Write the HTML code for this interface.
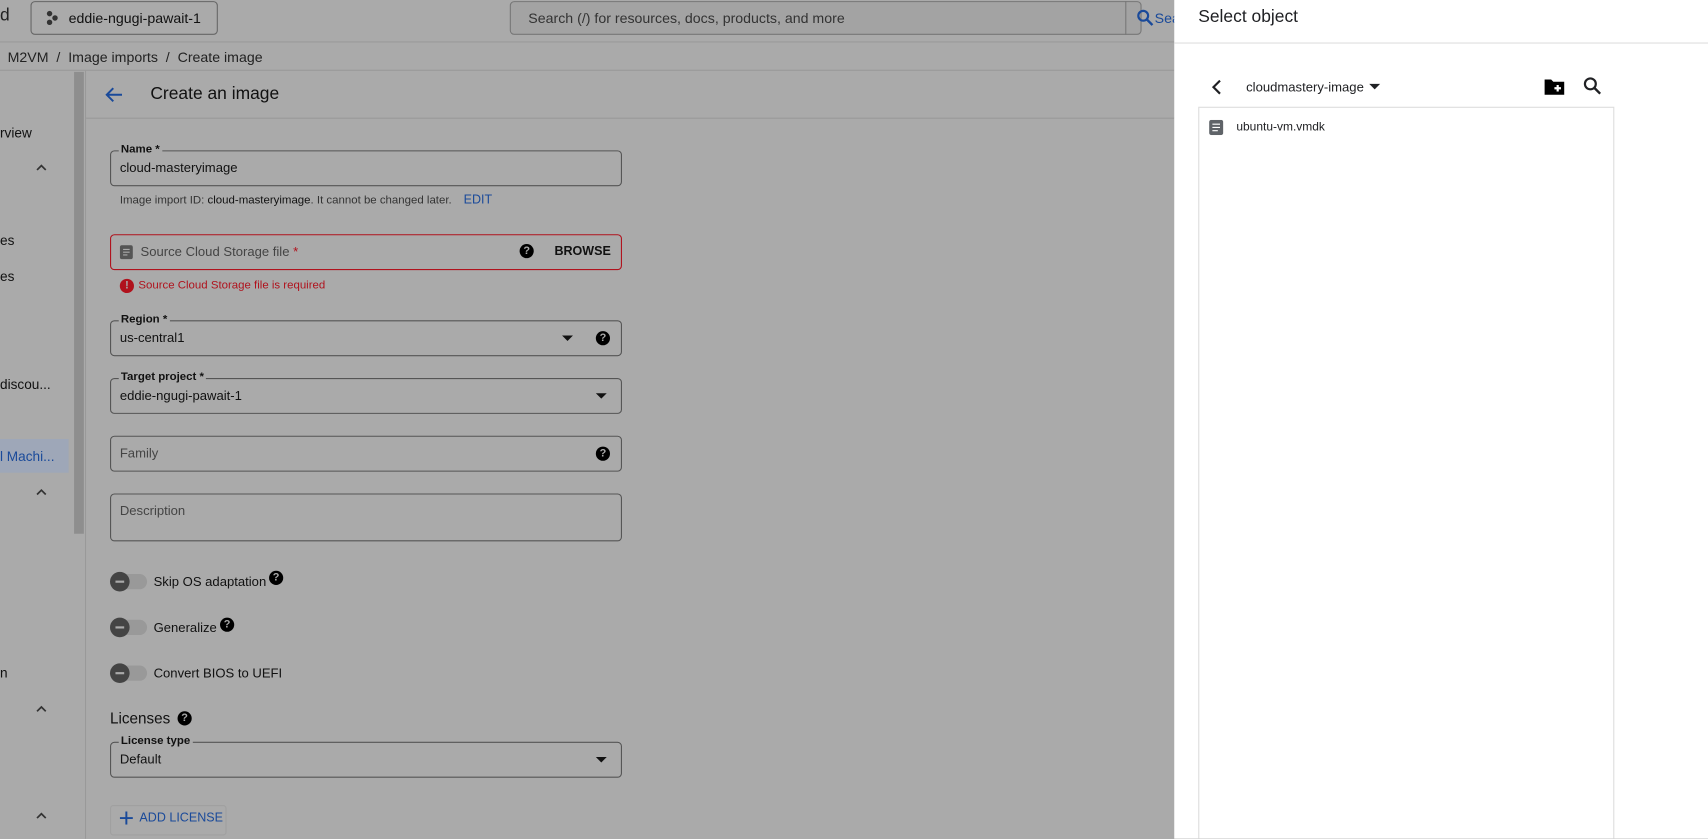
<!DOCTYPE html>
<html><head><meta charset="utf-8"><style>
*{box-sizing:border-box;margin:0;padding:0}
html,body{width:1708px;height:830px;overflow:hidden;background:#aaa;font-family:"Liberation Sans",Arial,sans-serif}
#w{position:absolute;left:0;top:0;width:1568px;height:770px;transform:scale(1.08929);transform-origin:0 0;background:#aaa;color:#111;overflow:hidden}
.a{position:absolute}
.fld{position:absolute;left:101px;width:470px;border:1px solid #555;border-radius:4px;height:33px}
.lbl{position:absolute;left:7px;top:-8px;background:#aaa;padding:0 2px;font-size:10.5px;font-weight:bold;color:#111}
.val{position:absolute;left:8px;top:8px;font-size:12px;color:#111}
.ph{position:absolute;left:8px;top:8px;font-size:12px;color:#444}
.q{position:absolute;width:13px;height:13px;border-radius:50%;background:#000;color:#aaa;font-size:10px;font-weight:bold;text-align:center;line-height:13px}
.tri{position:absolute;width:0;height:0;border-left:5px solid transparent;border-right:5px solid transparent;border-top:5px solid #111}
.tg{position:absolute;left:101px;width:34px;height:14px;border-radius:7px;background:#999}
.tg:before{content:"";position:absolute;left:0;top:-2px;width:18px;height:18px;border-radius:50%;background:#444}
.tg:after{content:"";position:absolute;left:5px;top:6px;width:8px;height:2px;background:#aaa}
.tl{position:absolute;left:141px;font-size:12px}
.car{position:absolute;left:32px}
</style></head><body><div id="w">
<div class="a" style="left:0;top:38px;width:1078px;height:1px;background:#999"></div>
<div class="a" style="left:0;top:6px;font-size:16px;color:#222">d</div>
<div class="a" style="left:28px;top:1px;width:172px;height:31px;border:1px solid #666;border-radius:4px"></div>
<div class="a" style="left:43px;top:10px;width:5px;height:5px;border-radius:50%;background:#333"></div>
<div class="a" style="left:48px;top:14px;width:5px;height:5px;border-radius:50%;background:#333"></div>
<div class="a" style="left:43px;top:18px;width:5px;height:5px;border-radius:50%;background:#333"></div>
<div class="a" style="left:63px;top:9px;font-size:13px;color:#111">eddie-ngugi-pawait-1</div>
<div class="a" style="left:468px;top:1px;width:580px;height:31px;border:1px solid #777;border-radius:4px;background:#a3a3a3"></div>
<div class="a" style="left:485px;top:9px;font-size:13px;color:#333">Search (/) for resources, docs, products, and more</div>
<div class="a" style="left:1033px;top:1px;width:1px;height:31px;background:#777"></div>
<svg class="a" style="left:1043px;top:8px" width="16" height="16" viewBox="0 0 16 16"><circle cx="6.5" cy="6.5" r="4.5" stroke="#1a4a9a" stroke-width="2" fill="none"/><path d="M10 10l5 5" stroke="#1a4a9a" stroke-width="2.2"/></svg>
<div class="a" style="left:1060px;top:9px;font-size:13px;color:#1a4a9a">Sea</div>
<div class="a" style="left:7px;top:45px;font-size:13px;color:#222">M2VM &nbsp;/ &nbsp;Image imports &nbsp;/ &nbsp;Create image</div>
<div class="a" style="left:0;top:64px;width:1078px;height:1px;background:#999"></div>
<div class="a" style="left:78px;top:65px;width:1px;height:710px;background:#999"></div>
<div class="a" style="left:68px;top:66px;width:9px;height:424px;background:#8e8e8e"></div>
<div class="a" style="left:0;top:115px;font-size:12.5px">rview</div>
<svg class="car" style="top:150px" width="12" height="8" viewBox="0 0 12 8"><path d="M2 6l4-4 4 4" stroke="#333" stroke-width="1.6" fill="none"/></svg>
<div class="a" style="left:0;top:214px;font-size:12.5px">es</div>
<div class="a" style="left:0;top:247px;font-size:12.5px">es</div>
<div class="a" style="left:0;top:346px;font-size:12.5px">discou...</div>
<div class="a" style="left:0;top:403px;width:63px;height:31px;background:#9ea7b8"></div>
<div class="a" style="left:0;top:412px;font-size:12.5px;color:#1a4a9a">l Machi...</div>
<svg class="car" style="top:448px" width="12" height="8" viewBox="0 0 12 8"><path d="M2 6l4-4 4 4" stroke="#333" stroke-width="1.6" fill="none"/></svg>
<div class="a" style="left:0;top:611px;font-size:12.5px">n</div>
<svg class="car" style="top:647px" width="12" height="8" viewBox="0 0 12 8"><path d="M2 6l4-4 4 4" stroke="#333" stroke-width="1.6" fill="none"/></svg>
<svg class="car" style="top:745px" width="12" height="8" viewBox="0 0 12 8"><path d="M2 6l4-4 4 4" stroke="#333" stroke-width="1.6" fill="none"/></svg>
<div class="a" style="left:79px;top:108px;width:999px;height:1px;background:#999"></div>
<svg class="a" style="left:96px;top:79px" width="18" height="16" viewBox="0 0 18 16"><path d="M16 8H3M8 2L2 8l6 6" stroke="#1a4a9a" stroke-width="1.8" fill="none"/></svg>
<div class="a" style="left:138px;top:78px;font-size:16px;color:#111">Create an image</div>
<div class="fld" style="top:138px"><span class="lbl">Name *</span><span class="val">cloud-masteryimage</span></div>
<div class="a" style="left:110px;top:178px;font-size:10.5px;color:#333">Image import ID: <span style="color:#111">cloud-masteryimage</span>. It cannot be changed later. <span style="color:#1a4a9a;margin-left:8px;font-size:11.5px">EDIT</span></div>
<div class="fld" style="top:215px;border-color:#b0121d;border-width:1.5px"><svg class="a" style="left:8px;top:9px" width="12" height="13" viewBox="0 0 12 13"><rect width="12" height="13" rx="2" fill="#555"/><path d="M3 4h6M3 6.5h6M3 9h4" stroke="#aaa" stroke-width="1"/></svg><span class="ph" style="left:27px">Source Cloud Storage file <span style="color:#b0121d">*</span></span><div class="q" style="left:375px;top:8px">?</div><span class="a" style="left:407px;top:9px;font-size:11.5px;font-weight:bold">BROWSE</span></div>
<div class="q" style="left:110px;top:256px;background:#b0121d;color:#aaa">!</div>
<div class="a" style="left:127px;top:256px;font-size:10.5px;color:#b0121d">Source Cloud Storage file is required</div>
<div class="fld" style="top:294px"><span class="lbl">Region *</span><span class="val">us-central1</span><div class="tri" style="left:414px;top:13px"></div><div class="q" style="left:445px;top:9px">?</div></div>
<div class="fld" style="top:347px"><span class="lbl">Target project *</span><span class="val">eddie-ngugi-pawait-1</span><div class="tri" style="left:445px;top:13px"></div></div>
<div class="fld" style="top:400px"><span class="ph">Family</span><div class="q" style="left:445px;top:9px">?</div></div>
<div class="fld" style="top:453px;height:44px"><span class="ph">Description</span></div>
<div class="tg" style="top:527px"></div><div class="tl" style="top:527px">Skip OS adaptation</div><div class="q" style="left:247px;top:524px">?</div>
<div class="tg" style="top:569px"></div><div class="tl" style="top:569px">Generalize</div><div class="q" style="left:202px;top:567px">?</div>
<div class="tg" style="top:611px"></div><div class="tl" style="top:611px">Convert BIOS to UEFI</div>
<div class="a" style="left:101px;top:651px;font-size:14px">Licenses</div><div class="q" style="left:163px;top:653px">?</div>
<div class="fld" style="top:681px"><span class="lbl">License type</span><span class="val">Default</span><div class="tri" style="left:445px;top:13px"></div></div>
<div class="a" style="left:101px;top:739px;width:107px;height:28px;border:1px solid #a0a0a0;border-radius:3px"></div>
<svg class="a" style="left:110px;top:745px" width="12" height="12" viewBox="0 0 12 12"><path d="M6 0v12M0 6h12" stroke="#1a4a9a" stroke-width="1.8"/></svg>
<div class="a" style="left:128px;top:745px;font-size:11.5px;color:#1a4a9a">ADD LICENSE</div>

<div class="a" style="left:1078px;top:0;width:490px;height:770px;background:#fff"></div>
<div class="a" style="left:1100px;top:7px;font-size:16px;color:#202124">Select object</div>
<div class="a" style="left:1078px;top:39px;width:490px;height:1px;background:#ddd"></div>
<svg class="a" style="left:1110px;top:72px" width="14" height="16" viewBox="0 0 14 16"><path d="M10 2L4 8l6 6" stroke="#202124" stroke-width="2" fill="none"/></svg>
<div class="a" style="left:1144px;top:73px;font-size:12px;color:#202124">cloudmastery-image</div>
<div class="tri" style="left:1257px;top:77px;border-top-color:#202124"></div>
<svg class="a" style="left:1417px;top:71px" width="20" height="17" viewBox="0 0 20 17"><path d="M1 2h6l2 2h10v12H1z" fill="#000"/><path d="M13 7v6M10 10h6" stroke="#fff" stroke-width="2"/></svg>
<svg class="a" style="left:1453px;top:70px" width="18" height="18" viewBox="0 0 18 18"><circle cx="7" cy="7" r="5" stroke="#202124" stroke-width="2" fill="none"/><path d="M11 11l5 5" stroke="#202124" stroke-width="2.2"/></svg>
<div class="a" style="left:1100px;top:98px;width:382px;height:690px;border:1px solid #ddd"></div>
<svg class="a" style="left:1110px;top:110px" width="13" height="14" viewBox="0 0 13 14"><rect width="13" height="14" rx="2" fill="#5f6368"/><path d="M3 4h7M3 7h7M3 10h5" stroke="#fff" stroke-width="1"/></svg>
<div class="a" style="left:1135px;top:111px;font-size:11px;color:#202124">ubuntu-vm.vmdk</div>
</div></body></html>
